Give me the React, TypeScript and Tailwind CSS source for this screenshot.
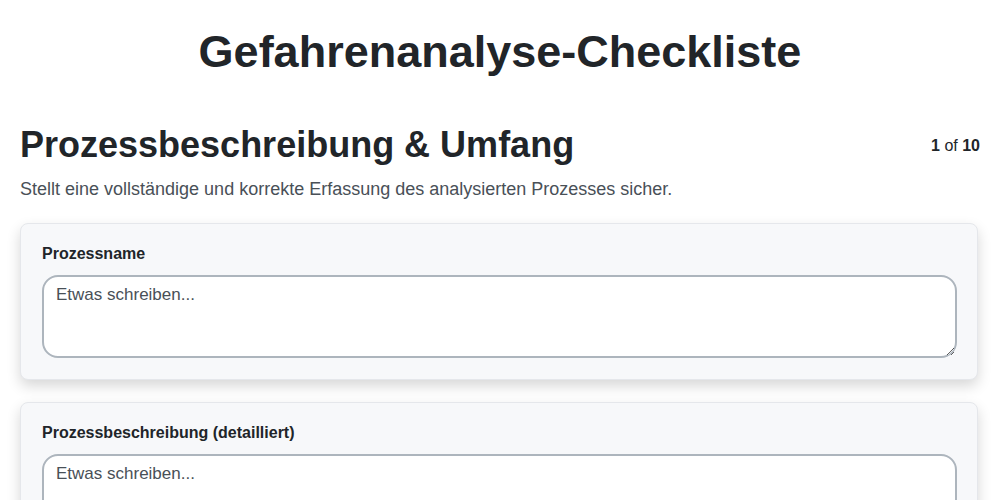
import React from "react";

function Field({ label }: { label: string }) {
  return (
    <div className="rounded-lg border border-[#e5e7eb] bg-[#f7f8fa] pl-[21px] pr-[20px] pt-[18px] pb-[21px] shadow-[0_6px_14px_rgba(0,0,0,0.16)] mr-[2px]">
      <label className="block text-base leading-6 font-bold text-[#212529] mb-[9px]">{label}</label>
      <textarea
        placeholder="Etwas schreiben..."
        className="block w-full h-[83px] rounded-2xl border-2 border-[#adb5bd] bg-white px-3 py-1.5 text-[17px] leading-6 text-[#212529] placeholder:text-[#495057] outline-none"
      />
    </div>
  );
}

export default function App() {
  return (
    <div className="min-h-[500px] bg-white text-[#212529]" style={{ fontFamily: '"Liberation Sans", Arial, sans-serif' }}>
      <h1 className="pt-[26px] text-center text-[45px] leading-[52px] font-bold text-[#212529]">Gefahrenanalyse-Checkliste</h1>
      <div className="px-5 pt-[45px]">
        <div className="flex items-start justify-between">
          <h2 className="text-4xl leading-[44px] font-bold text-[#212529]">Prozessbeschreibung &amp; Umfang</h2>
          <div className="pt-[11px] text-base leading-6 text-[#212529]">
            <span className="font-bold">1</span> of <span className="font-bold">10</span>
          </div>
        </div>
        <p className="mt-[10px] text-[18px] leading-6 text-[#495057]">Stellt eine vollständige und korrekte Erfassung des analysierten Prozesses sicher.</p>
        <div className="mt-[22px] flex flex-col gap-[22px]">
          <Field label="Prozessname" />
          <Field label="Prozessbeschreibung (detailliert)" />
        </div>
      </div>
    </div>
  );
}
